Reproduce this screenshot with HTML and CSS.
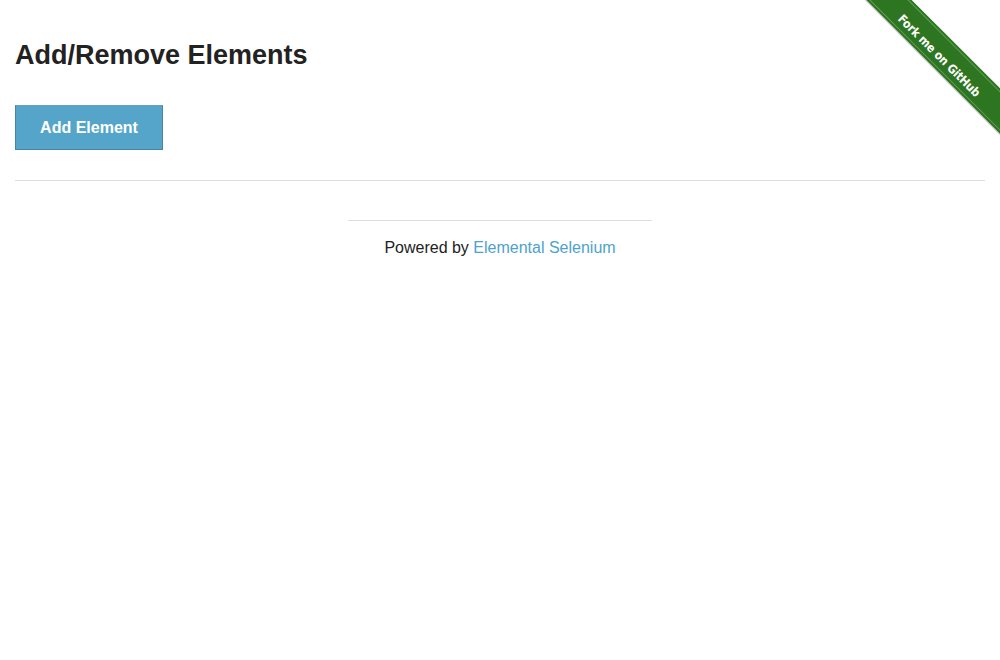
FILE: index.html
```html
<!DOCTYPE html>
<html>
<head>
<meta charset="utf-8">
<link rel="stylesheet" href="styles.css">
</head>
<body>
<a class="ribbon" href="#"><span>Fork me on GitHub</span></a>
<div class="row">
  <div class="content">
    <h3 class="title">Add/Remove Elements</h3>
    <button class="add-btn">Add Element</button>
    <div class="elements"></div>
  </div>
</div>
<div class="footer-wrap">
  <hr class="rule">
  <div class="footer">
    <hr class="footer-rule">
    <div class="powered">Powered by <a class="link" href="#">Elemental Selenium</a></div>
  </div>
</div>
</body>
</html>
```

FILE: styles.css
```css
html, body {
  margin: 0;
  padding: 0;
  background: #fff;
  font-family: "Liberation Sans", Arial, sans-serif;
  color: #222;
  overflow: hidden;
}
.row {
  padding: 0 15px;
}
.content {
  display: flex;
  flex-direction: column;
  align-items: flex-start;
}
.title {
  margin: 38px 0 0 0;
  font-size: 27px;
  font-weight: bold;
  line-height: 34px;
  color: #222;
}
.add-btn {
  margin-top: 33px;
  width: 148px;
  height: 45px;
  background: #55a5ca;
  border: 1px solid #4a85a0;
  border-top-color: #6a9fba;
  color: #fff;
  font-family: "Liberation Sans", Arial, sans-serif;
  font-weight: bold;
  font-size: 16px;
  padding: 0;
  cursor: pointer;
}
.footer-wrap {
  padding: 0 15px;
}
.rule {
  margin: 30px 0 0 0;
  border: 0;
  border-top: 1px solid #ddd;
  height: 0;
}
.footer {
  display: flex;
  flex-direction: column;
  align-items: center;
}
.footer-rule {
  margin: 39px 0 0 0;
  width: 304px;
  border: 0;
  border-top: 1px solid #ddd;
  height: 0;
}
.powered {
  margin-top: 17px;
  font-size: 16px;
  line-height: 20px;
  color: #222;
}
.link {
  color: #4ea2cc;
  text-decoration: none;
}
.ribbon {
  position: absolute;
  left: 844px;
  top: 39px;
  width: 200px;
  height: 32px;
  transform: rotate(45deg);
  background: #2e7521;
  display: flex;
  align-items: center;
  justify-content: center;
  text-decoration: none;
  box-shadow: 0 1px 1px rgba(0,0,0,0.25);
}
.ribbon::before, .ribbon::after {
  content: "";
  position: absolute;
  left: 0;
  right: 0;
  height: 0;
  border-top: 1px solid rgba(140, 190, 130, 0.55);
}
.ribbon::before { top: 2px; }
.ribbon::after { bottom: 2px; }
.ribbon span {
  color: #fff;
  font-family: "DejaVu Sans Condensed", "DejaVu Sans", sans-serif;
  font-weight: bold;
  font-size: 12px;
  letter-spacing: -0.2px;
  margin-top: 8px;
  margin-left: -6px;
}
```
